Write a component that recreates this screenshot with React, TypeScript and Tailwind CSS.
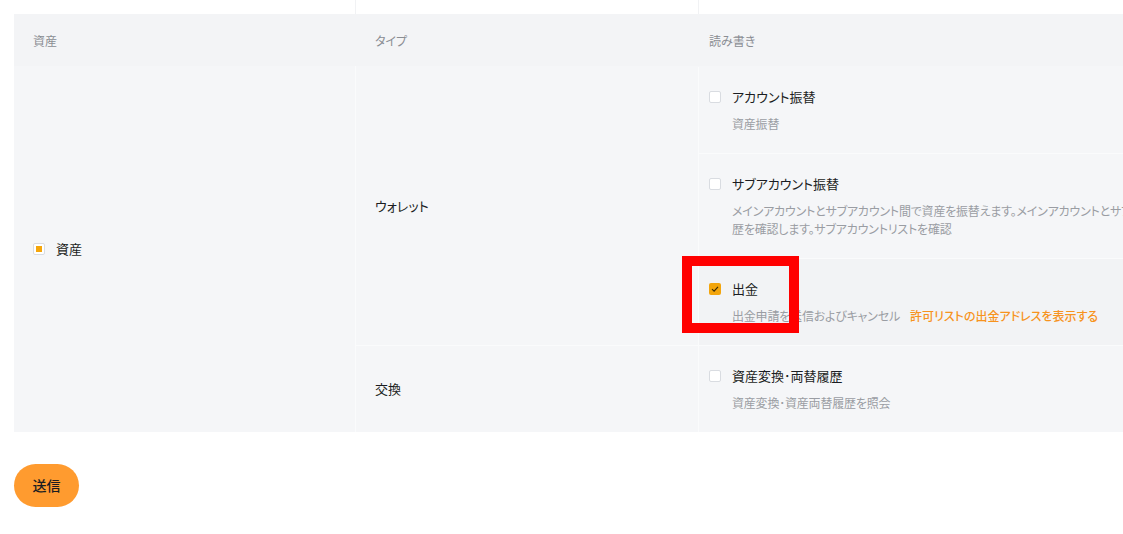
import React from 'react';

const font = { fontFamily: '"Noto Sans CJK JP", "Noto Sans", sans-serif' };

type Perm = {
  title: string;
  lines: string[];
  checked?: boolean;
  link?: string;
  active?: boolean;
};

const walletPerms: Perm[] = [
  { title: 'アカウント振替', lines: ['資産振替'] },
  {
    title: 'サブアカウント振替',
    lines: [
      'メインアカウントとサブアカウント間で資産を振替えます。メインアカウントとサブアカウントの振替履',
      '歴を確認します。サブアカウントリストを確認',
    ],
  },
  {
    title: '出金',
    lines: ['出金申請を送信およびキャンセル'],
    checked: true,
    link: '許可リストの出金アドレスを表示する',
    active: true,
  },
];

const exchangePerms: Perm[] = [
  { title: '資産変換･両替履歴', lines: ['資産変換･資産両替履歴を照会'] },
];

function Checkbox({ checked, partial }: { checked?: boolean; partial?: boolean }) {
  if (checked) {
    return (
      <span className="flex h-[12px] w-[12px] shrink-0 items-center justify-center rounded-[2px] bg-[#f3a50c]">
        <svg width="8" height="8" viewBox="0 0 8 8" fill="none">
          <path d="M1 4.2 L3.1 6.2 L7 1.8" stroke="#3a2a08" strokeWidth="1.1" />
        </svg>
      </span>
    );
  }
  return (
    <span className="flex h-[12px] w-[12px] shrink-0 items-center justify-center rounded-[2px] border border-[#d9dce1] bg-white">
      {partial && <span className="h-[6px] w-[6px] bg-[#f5a60b]" />}
    </span>
  );
}

function PermRow({ p, first }: { p: Perm; first?: boolean }) {
  return (
    <div
      className={`pl-[10px] pt-[20px] pb-[20px] ${p.active ? 'bg-[#f2f3f5]' : 'bg-[#f5f6f8]'} ${first ? '' : 'border-t border-[#fafbfc]'}`}
    >
      <div className="flex h-[20px] items-center gap-[11px]">
        <Checkbox checked={p.checked} />
        <span className="text-[13px] text-[#1b1d22]">{p.title}</span>
      </div>
      <div className="mt-[8px] whitespace-nowrap pl-[23px] text-[12px] leading-[18px] tracking-[-0.2px] text-[#9a9da3]">
        {p.lines.map((l, i) => (
          <div key={i}>
            {l}
            {p.link && i === p.lines.length - 1 && (
              <span className="ml-[10px] font-medium tracking-normal text-[#f7931e]">{p.link}</span>
            )}
          </div>
        ))}
      </div>
    </div>
  );
}

function TypeGroup({ name, perms }: { name: string; perms: Perm[] }) {
  return (
    <div className="flex">
      <div className="flex w-[343px] shrink-0 items-center border-r border-[#fafbfc] bg-[#f5f6f8] pl-[19px] text-[13px] text-[#1b1d22]">
        {name}
      </div>
      <div className="flex-1">
        {perms.map((p, i) => (
          <PermRow key={p.title} p={p} first={i === 0} />
        ))}
      </div>
    </div>
  );
}

export default function App() {
  return (
    <div className="relative h-[534px] w-[1123px] overflow-hidden bg-white [font-feature-settings:'palt']" style={font}>
      <div className="w-[1400px] pl-[14px]">
        {/* previous row edge */}
        <div className="flex h-[14px]">
          <div className="w-[342px] border-r border-[#f1f2f4]" />
          <div className="w-[343px] border-r border-[#f1f2f4]" />
          <div className="flex-1" />
        </div>

        {/* header */}
        <div className="flex h-[52px] items-center bg-[#f3f4f6] pt-[1px] text-[12px] text-[#8a8d93]">
          <div className="w-[342px] pl-[19px]">資産</div>
          <div className="w-[343px] pl-[19px]">タイプ</div>
          <div className="flex-1 pl-[10px]">読み書き</div>
        </div>

        {/* body */}
        <div className="flex">
          <div className="flex w-[342px] shrink-0 items-center gap-[11px] border-r border-[#fafbfc] bg-[#f5f6f8] pl-[19px]">
            <Checkbox partial />
            <span className="text-[13px] text-[#1b1d22]">資産</span>
          </div>
          <div className="flex-1">
            <div className="pt-[1px] bg-[#f5f6f8]">
              <TypeGroup name="ウォレット" perms={walletPerms} />
            </div>
            <div className="border-t border-[#fafbfc]">
              <TypeGroup name="交換" perms={exchangePerms} />
            </div>
          </div>
        </div>

        <div className="pt-[32px]">
          <button className="h-[43px] w-[65px] rounded-full bg-[#ff9b2f] text-[14px] font-medium text-[#1b1d22]">
            送信
          </button>
        </div>
      </div>

      {/* annotation */}
      <div className="pointer-events-none absolute left-[682px] top-[256px] h-[77px] w-[117px] border-[10px] border-[#ff0000]" />
    </div>
  );
}
